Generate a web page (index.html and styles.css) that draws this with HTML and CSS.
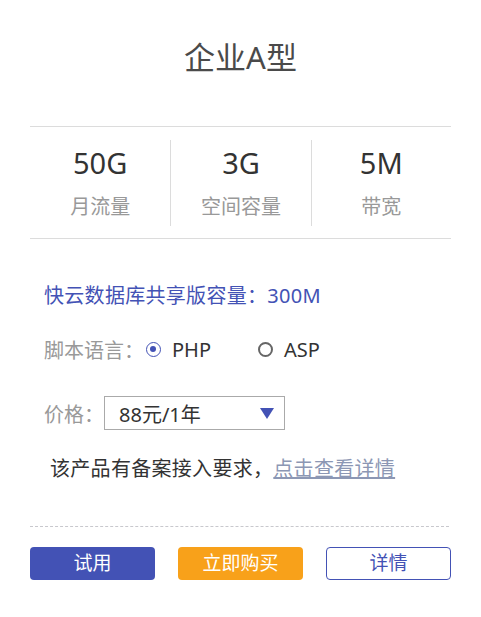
FILE: index.html
```html
<!DOCTYPE html>
<html lang="zh-CN">
<head>
<meta charset="utf-8">
<title>企业A型</title>
<link rel="stylesheet" href="styles.css">
</head>
<body>
<div class="card">
  <h1 class="title">企业A型</h1>
  <div class="stats">
    <div class="stat"><div class="num">50G</div><div class="label">月流量</div></div>
    <div class="stat"><div class="num">3G</div><div class="label">空间容量</div></div>
    <div class="stat"><div class="num">5M</div><div class="label">带宽</div></div>
  </div>
  <div class="info">
    <div class="db">快云数据库共享版容量：300M</div>
    <div class="row script">
      <span class="key">脚本语言：</span>
      <span class="radio checked"></span><span class="opt">PHP</span>
      <span class="radio"></span><span class="opt">ASP</span>
    </div>
    <div class="row price">
      <span class="key">价格：</span>
      <div class="select"><span>88元/1年</span><span class="arrow"></span></div>
    </div>
    <div class="notice">该产品有备案接入要求，<a class="link" href="#">点击查看详情</a></div>
  </div>
  <div class="dash"></div>
  <div class="buttons">
    <div class="btn btn-try">试用</div>
    <div class="btn btn-buy">立即购买</div>
    <div class="btn btn-detail">详情</div>
  </div>
</div>
</body>
</html>
```
FILE: styles.css
```css
* { box-sizing: border-box; }
body {
  margin: 0;
  background: #fff;
  font-family: "Noto Sans", "Noto Sans CJK SC", sans-serif;
  font-size: 20px;
  color: #333;
}
.card { padding: 0 30px; }
.title {
  margin: 37px 0 49px;
  font-size: 31px;
  font-weight: normal;
  line-height: 40px;
  text-align: center;
  color: #4a4a4a;
}
.stats {
  display: grid;
  grid-template-columns: 1fr 1fr 1fr;
  border-top: 1px solid #dcdcdc;
  border-bottom: 1px solid #dcdcdc;
  padding: 13px 0 12px;
}
.stat {
  text-align: center;
  padding: 6px 0 5px;
}
.stat + .stat { border-left: 1px solid #dcdcdc; }
.num {
  font-size: 29px;
  line-height: 34px;
  color: #333;
}
.label {
  margin-top: 13px;
  font-size: 20px;
  line-height: 28px;
  color: #999;
}
.info { padding-left: 14px; }
.db {
  margin-top: 42px;
  line-height: 30px;
  color: #4352b5;
  letter-spacing: 0.3px;
}
.row { display: flex; align-items: center; }
.key { color: #999; }
.script { margin-top: 23px; height: 30px; }
.radio {
  width: 15px;
  height: 15px;
  border-radius: 50%;
  border: 2px solid #666;
  margin-left: 2px;
  margin-right: 11px;
  position: relative;
}
.radio.checked { border-color: #4352b5; border-width: 1.5px; }
.radio.checked::after {
  content: "";
  position: absolute;
  left: 3px; top: 3px;
  width: 6px; height: 6px;
  border-radius: 50%;
  background: #4352b5;
}
.opt { margin-right: 45px; color: #333; }
.price { margin-top: 32px; }
.select {
  width: 181px;
  height: 34px;
  border: 1px solid #aaa;
  display: flex;
  align-items: center;
  justify-content: space-between;
  padding: 0 10px 0 14px;
  color: #333;
}
.arrow {
  width: 0; height: 0;
  border-left: 7px solid transparent;
  border-right: 7px solid transparent;
  border-top: 11px solid #4352b5;
}
.notice {
  margin-top: 24px;
  padding-left: 6px;
  line-height: 30px;
  color: #333;
  letter-spacing: 0.3px;
}
.link { color: #8c97b4; text-decoration: underline; }
.dash {
  margin-top: 42px;
  border-top: 1px dashed #c8c8cd;
  margin-right: 2px;
}
.buttons {
  margin-top: 20px;
  display: flex;
  justify-content: space-between;
}
.btn {
  width: 125px;
  height: 33px;
  border-radius: 4px;
  text-align: center;
  line-height: 33px;
  font-size: 19px;
}
.btn-try { background: #4352b5; color: #fff; }
.btn-buy { background: #f8a11a; color: #fff; }
.btn-detail { border: 1px solid #4352b5; color: #4352b5; line-height: 31px; }
```
